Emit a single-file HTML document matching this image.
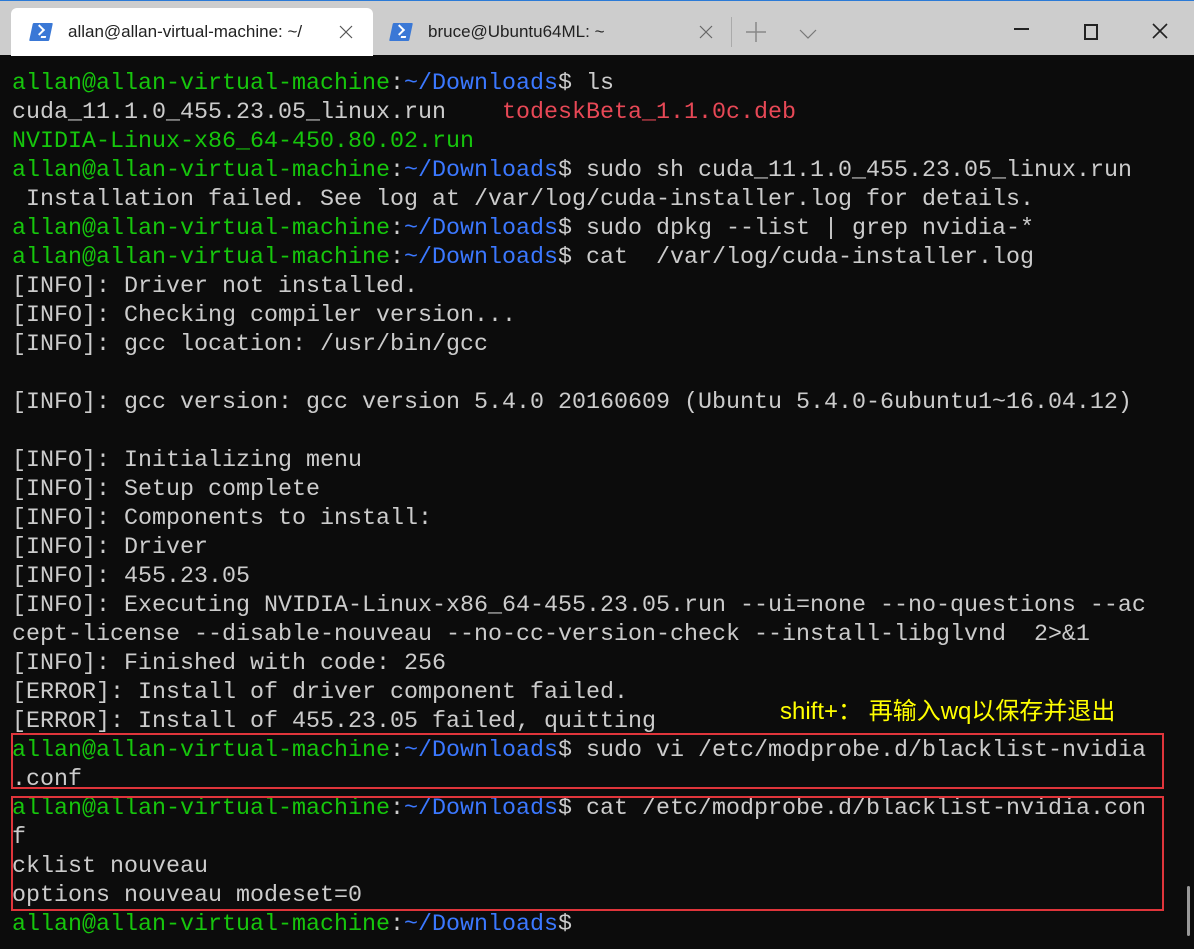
<!DOCTYPE html>
<html><head><meta charset="utf-8"><style>
*{margin:0;padding:0;box-sizing:border-box}
body{width:1194px;height:949px;overflow:hidden;background:#0c0c0c;position:relative;font-family:"Liberation Sans","Noto Sans CJK SC",sans-serif}
#bar{position:absolute;left:0;top:0;width:1194px;height:55px;background:#cdcdcd;border-top:1px solid #2b7ad6}
.tab{position:absolute;top:7px;height:48px;font-size:17px;color:#222}
#t1{left:11px;width:362px;background:#fff;border-radius:6px 6px 0 0}
#t2{left:373px;width:350px}
.ic{position:absolute;left:20px;top:15px;width:20px;height:18px;background:#3a78d6;transform:skewX(-12deg);border-radius:1px}
.ic:after{content:"";position:absolute;left:4px;top:3px;width:6px;height:6px;border-right:2px solid #fff;border-bottom:2px solid #fff;transform:skewX(12deg) rotate(-45deg)}
.ic:before{content:"";position:absolute;left:11px;top:13px;width:5px;height:2px;background:#fff}
.lbl{position:absolute;left:57px;top:14px;white-space:nowrap}
#term{position:absolute;left:12px;top:70px;font-family:"Liberation Mono",monospace;font-size:23.33px;line-height:29px;color:#cccccc;white-space:pre}
.g{color:#16c60c}.b{color:#3b78ff}.r{color:#e74856}
.box{position:absolute;border:2px solid #e0353b}
</style></head><body>
<div id="bar">
<div class="tab" id="t1"><div class="ic"></div><span class="lbl">allan@allan-virtual-machine: ~/</span>
<svg style="position:absolute;left:328px;top:17px" width="14" height="14"><path d="M1 1L13 13M13 1L1 13" stroke="#555" stroke-width="1.2"/></svg></div>
<div class="tab" id="t2"><div class="ic" style="left:18px"></div><span class="lbl" style="left:55px">bruce@Ubuntu64ML: ~</span>
<svg style="position:absolute;left:326px;top:17px" width="14" height="14"><path d="M1 1L13 13M13 1L1 13" stroke="#666" stroke-width="1.2"/></svg></div>
<div style="position:absolute;left:731px;top:16px;width:1px;height:30px;background:#aaa"></div>
<svg style="position:absolute;left:746px;top:21px" width="20" height="20"><path d="M10 0V20M0 10H20" stroke="#888" stroke-width="1.5"/></svg>
<svg style="position:absolute;left:799px;top:27px" width="18" height="12"><path d="M1 2L9 10L17 2" stroke="#777" fill="none" stroke-width="1.2"/></svg>
<div style="position:absolute;left:1014px;top:27px;width:15px;height:2px;background:#222"></div>
<div style="position:absolute;left:1084px;top:23px;width:14px;height:16px;border:2px solid #222"></div>
<svg style="position:absolute;left:1152px;top:22px" width="16" height="16"><path d="M1 1L15 15M15 1L1 15" stroke="#222" stroke-width="1.6"/></svg>
</div>
<div id="term"><span class="g">allan@allan-virtual-machine</span>:<span class="b">~/Downloads</span>$ ls
cuda_11.1.0_455.23.05_linux.run    <span class="r">todeskBeta_1.1.0c.deb</span>
<span class="g">NVIDIA-Linux-x86_64-450.80.02.run</span>
<span class="g">allan@allan-virtual-machine</span>:<span class="b">~/Downloads</span>$ sudo sh cuda_11.1.0_455.23.05_linux.run
 Installation failed. See log at /var/log/cuda-installer.log for details.
<span class="g">allan@allan-virtual-machine</span>:<span class="b">~/Downloads</span>$ sudo dpkg --list | grep nvidia-*
<span class="g">allan@allan-virtual-machine</span>:<span class="b">~/Downloads</span>$ cat  /var/log/cuda-installer.log
[INFO]: Driver not installed.
[INFO]: Checking compiler version...
[INFO]: gcc location: /usr/bin/gcc

[INFO]: gcc version: gcc version 5.4.0 20160609 (Ubuntu 5.4.0-6ubuntu1~16.04.12)

[INFO]: Initializing menu
[INFO]: Setup complete
[INFO]: Components to install:
[INFO]: Driver
[INFO]: 455.23.05
[INFO]: Executing NVIDIA-Linux-x86_64-455.23.05.run --ui=none --no-questions --ac
cept-license --disable-nouveau --no-cc-version-check --install-libglvnd  2>&amp;1
[INFO]: Finished with code: 256
[ERROR]: Install of driver component failed.
[ERROR]: Install of 455.23.05 failed, quitting
<span class="g">allan@allan-virtual-machine</span>:<span class="b">~/Downloads</span>$ sudo vi /etc/modprobe.d/blacklist-nvidia
.conf
<span class="g">allan@allan-virtual-machine</span>:<span class="b">~/Downloads</span>$ cat /etc/modprobe.d/blacklist-nvidia.con
f
cklist nouveau
options nouveau modeset=0
<span class="g">allan@allan-virtual-machine</span>:<span class="b">~/Downloads</span>$</div>
<div style="position:absolute;left:780px;top:697px;color:#ffff00;font-size:24px;white-space:nowrap;line-height:30px">shift+： 再输入wq以保存并退出</div>
<div class="box" style="left:11px;top:733px;width:1153px;height:56px"></div>
<div class="box" style="left:11px;top:796px;width:1153px;height:115px"></div>
<div style="position:absolute;left:1187px;top:886px;width:3px;height:50px;background:#999;border-radius:2px"></div>
</body></html>
